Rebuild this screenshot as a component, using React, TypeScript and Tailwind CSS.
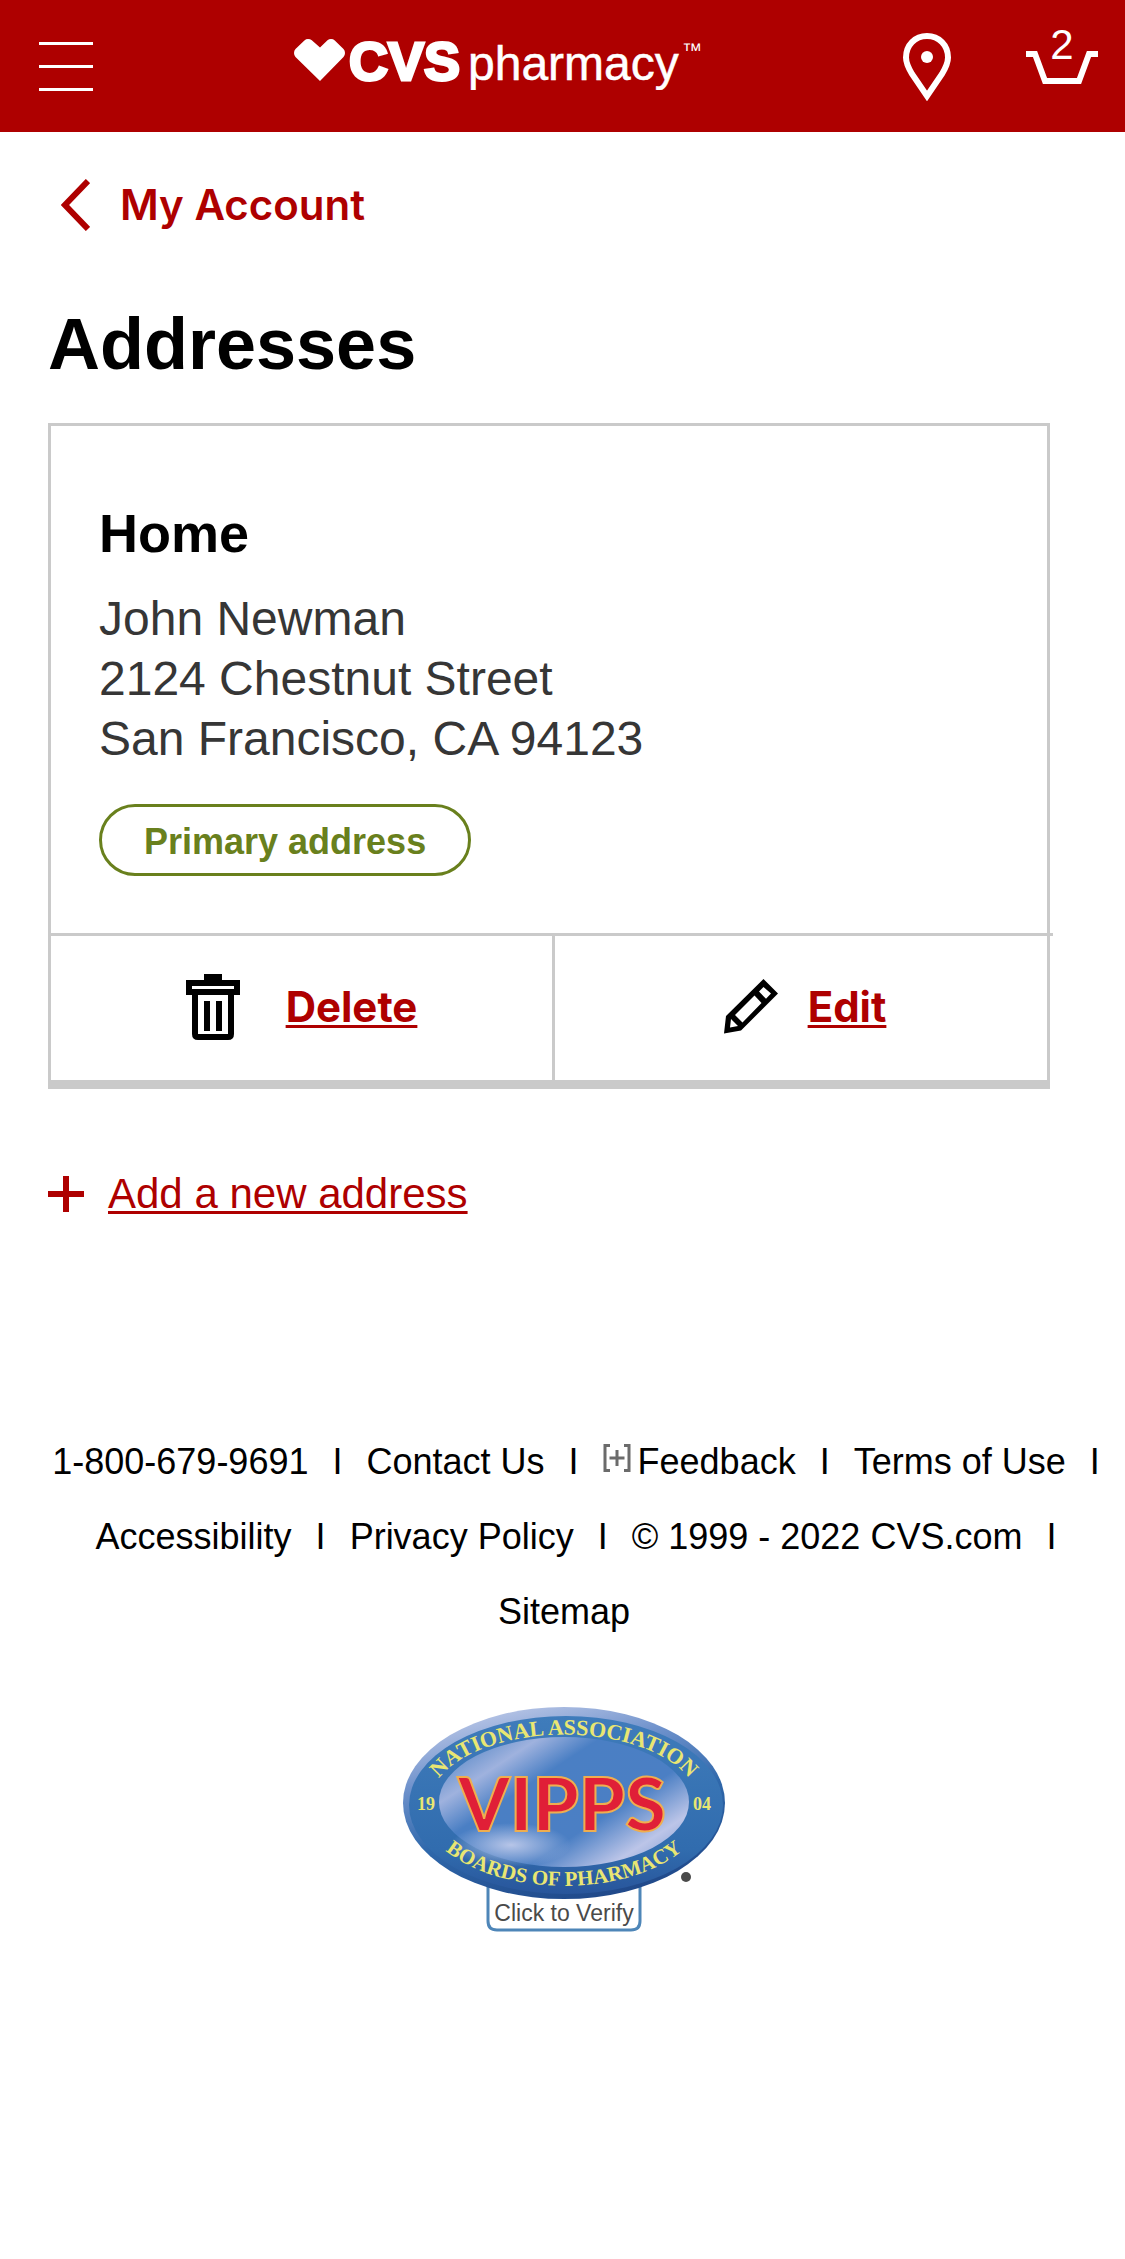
import React from 'react';

const footerLinks = [
  { label: '1-800-679-9691', href: 'tel:18006799691' },
  { label: 'Contact Us', href: '#contact' },
  { label: 'Feedback', href: '#feedback', icon: true },
  { label: 'Terms of Use', href: '#terms' },
  { label: 'Accessibility', href: '#accessibility' },
  { label: 'Privacy Policy', href: '#privacy' },
  { label: '© 1999 - 2022 CVS.com', href: '#copyright' },
];

const Logo: React.FC = () => (
  <svg width="412" height="60" viewBox="0 0 412 60" fill="#fff" role="img" aria-label="CVS pharmacy">
    <path d="M26 17.5 L33.5 10.2 Q35 9 37 9 Q39.2 9 40.8 10.4 L49.5 19 Q51 20.6 51 23 Q51 25.4 49.5 27 L26 51 L1.5 27 Q0 25.4 0 23 Q0 20.6 1.5 19 L10.4 10.4 Q12 9 14 9 Q16.2 9 17.8 10.2 Z" />
    <text x="55" y="50" className="font-['Liberation_Sans',sans-serif] text-[54px] font-bold" stroke="#fff" strokeWidth="3">
      CVS
    </text>
    <text x="174" y="50" className="font-['Liberation_Sans',sans-serif] text-[48px]" stroke="#fff" strokeWidth="0.5">
      pharmacy
    </text>
    <text x="388" y="27" className="font-['Liberation_Sans',sans-serif] text-[20px]">
      ™
    </text>
  </svg>
);

const PinIcon: React.FC = () => (
  <svg width="48" height="68" viewBox="0 0 48 68" fill="none">
    <path
      d="M24 3 C12 3 3 12 3 24.5 C3 31 6 36 9 41 L24 63 L39 41 C42 36 45 31 45 24.5 C45 12 36 3 24 3 Z"
      stroke="#fff"
      strokeWidth="6"
    />
    <circle cx="24" cy="24" r="6" fill="#fff" />
  </svg>
);

const BasketIcon: React.FC = () => (
  <svg width="72" height="33" viewBox="0 0 72 33" fill="none">
    <path d="M0 3 H9 L19 30 H53 L63 3 H72" stroke="#fff" strokeWidth="6" />
  </svg>
);

const TrashIcon: React.FC = () => (
  <svg width="54" height="66" viewBox="0 0 54 66">
    <path
      fillRule="evenodd"
      d="M18 0 H36 V6 H54 V21 H48 V60 Q48 66 42 66 H12 Q6 66 6 60 V21 H0 V6 H18 Z M6 12 V15 H48 V12 Z M12 21 V60 H42 V21 Z"
    />
    <path d="M18 27 H24 V57 H18 Z M30 27 H36 V57 H30 Z" />
  </svg>
);

const PencilIcon: React.FC = () => (
  <svg width="54" height="55" viewBox="0 0 54 55">
    <path
      fillRule="evenodd"
      d="M39.5 0 L54 14.5 L17 51.5 L0 54.5 L2 37 Z M39.5 8 L35 12.5 L42 19.8 L47 14.5 Z M30.5 16.5 L11 36 L18.5 43.5 L37.5 24 Z M7 40 L6 48.5 L14 47 Z"
    />
  </svg>
);

const VippsSeal: React.FC = () => (
  <svg width="324" height="226" viewBox="0 0 324 226" role="img" aria-label="VIPPS seal">
    <defs>
      <linearGradient id="rim" x1="0.2" y1="0" x2="0.6" y2="1">
        <stop offset="0" stopColor="#c3cdea" />
        <stop offset="0.3" stopColor="#6f92cc" />
        <stop offset="0.6" stopColor="#2f68ab" />
        <stop offset="1" stopColor="#20498a" />
      </linearGradient>
      <linearGradient id="ring" x1="0" y1="0" x2="0" y2="1">
        <stop offset="0" stopColor="#3f7cbb" />
        <stop offset="0.75" stopColor="#316cae" />
        <stop offset="1" stopColor="#28559b" />
      </linearGradient>
      <linearGradient id="face" x1="0" y1="0.1" x2="1" y2="0.9">
        <stop offset="0" stopColor="#4a80c2" />
        <stop offset="0.2" stopColor="#9fb2de" />
        <stop offset="0.35" stopColor="#4a7fc4" />
        <stop offset="0.65" stopColor="#4b7fc4" />
        <stop offset="0.85" stopColor="#bcc5e8" />
        <stop offset="1" stopColor="#7f9cd2" />
      </linearGradient>
      <radialGradient id="glow">
        <stop offset="0" stopColor="#c3cdec" stopOpacity="0.9" />
        <stop offset="1" stopColor="#c3cdec" stopOpacity="0" />
      </radialGradient>
      <path id="arcTop" d="M31 83 A135 70 0 0 1 295 83" />
      <path id="arcBottom" d="M26 123 A145 83 0 0 0 300 123" />
    </defs>
    <path d="M87 170 V214 Q87 223 96 223 H230 Q239 223 239 214 V170" fill="#fff" stroke="#4e86b8" strokeWidth="3" />
    <ellipse cx="163" cy="96" rx="161" ry="96" fill="url(#rim)" />
    <ellipse cx="165" cy="98" rx="157" ry="89" fill="url(#ring)" />
    <ellipse cx="163" cy="95" rx="125" ry="65" fill="url(#face)" />
    <ellipse cx="110" cy="138" rx="60" ry="22" fill="url(#glow)" />
    <g className="font-['Liberation_Serif',serif] font-bold" fill="#e9e672">
      <text textAnchor="middle" className="text-[22px]">
        <textPath href="#arcTop" startOffset="50%">
          NATIONAL ASSOCIATION
        </textPath>
      </text>
      <text textAnchor="middle" className="text-[21px]">
        <textPath href="#arcBottom" startOffset="50%">
          BOARDS OF PHARMACY
        </textPath>
      </text>
      <text x="16" y="103" className="text-[18px]">19</text>
      <text x="292" y="103" className="text-[18px]">04</text>
    </g>
    <text
      x="161"
      y="124"
      textAnchor="middle"
      className="font-['Lato',sans-serif] text-[74px] font-black"
      fill="#e01f37"
      stroke="#efae4f"
      strokeWidth="2"
    >
      VIPPS
    </text>
    <circle cx="285" cy="170" r="5" fill="#4a4a4a" />
    <text x="163" y="214" textAnchor="middle" className="font-['Liberation_Sans',sans-serif] text-[23px]" fill="#4a4a4a">
      Click to Verify
    </text>
  </svg>
);

const App: React.FC = () => {
  return (
    <div className="bg-white text-black font-['Liberation_Sans',Arial,sans-serif]">
      {/* Header */}
      <header className="flex items-start bg-[#ae0000] h-[132px] pl-[39px] pr-[27px]">
        <button type="button" aria-label="Menu" className="mt-[42px] flex w-[54px] flex-col gap-5">
          <span className="h-[3px] w-full bg-white" />
          <span className="h-[3px] w-full bg-white" />
          <span className="h-[3px] w-full bg-white" />
        </button>
        <a href="#home" className="mt-[30px] ml-[201px]">
          <Logo />
        </a>
        <a href="#stores" aria-label="Store locator" className="mt-[33px] ml-auto">
          <PinIcon />
        </a>
        <a href="#cart" aria-label="Basket" className="relative mt-[51px] ml-[75px] text-white">
          <BasketIcon />
          <span className="absolute inset-x-0 -top-[30px] text-center text-[42px] leading-[48px]">2</span>
        </a>
      </header>

      <main className="pl-[48px] pr-[75px]">
        <a href="#account" className="mt-[46px] ml-[13px] flex h-[54px] w-fit items-center gap-[30px] text-[#ae0000]">
          <svg width="29" height="52" viewBox="0 0 29 52" fill="none" stroke="currentColor" strokeWidth="6">
            <path d="M27 2 L4 26 L27 50" />
          </svg>
          <span className="font-['Inter',sans-serif] text-[42px] leading-[54px] font-semibold">My Account</span>
        </a>

        <h1 className="mt-[70px] text-[72px] leading-[84px] font-bold">Addresses</h1>

        {/* Address card */}
        <section className="mt-[37px] border-[3px] border-b-[9px] border-[#cacaca]">
          <div className="px-[48px] pt-[77px] pb-[57px]">
            <h2 className="text-[54px] leading-[60px] font-bold">Home</h2>
            <address className="mt-[26px] text-[48px] leading-[60px] text-[#363636] not-italic">
              John Newman
              <br />
              2124 Chestnut Street
              <br />
              San Francisco, CA 94123
            </address>
            <span className="mt-[35px] flex h-[72px] w-fit items-center rounded-full border-[3px] border-[#69801d] px-[42px] pt-1 text-[36px] font-bold text-[#69801d]">
              Primary address
            </span>
          </div>
          <div className="-mr-1.5 h-[3px] bg-[#cacaca]" />
          <div className="grid h-[144px] grid-cols-[42fr_41fr] font-['Inter',sans-serif] text-[42px] font-bold text-[#ae0000]">
            <button type="button" className="flex items-center justify-center gap-[46px] border-r-[3px] border-[#cacaca] pb-[3px]">
              <span className="text-black"><TrashIcon /></span>
              <span className="underline decoration-[3px] underline-offset-[3px]">Delete</span>
            </button>
            <button type="button" className="flex items-center justify-center gap-[30px] pl-2 pb-[3px]">
              <span className="text-black"><PencilIcon /></span>
              <span className="underline decoration-[3px] underline-offset-[3px]">Edit</span>
            </button>
          </div>
        </section>

        <a href="#add" className="mt-[81px] flex w-fit items-center gap-6 text-[42px] leading-[48px] text-[#ae0000]">
          <svg width="36" height="36" viewBox="0 0 36 36" stroke="currentColor" strokeWidth="6">
            <path d="M18 0 V36 M0 18 H36" />
          </svg>
          <span className="underline decoration-[3px] underline-offset-[3px]">Add a new address</span>
        </a>
      </main>

      {/* Footer */}
      <footer className="mt-[206px] flex flex-col items-center">
        <ul className="flex flex-wrap justify-center pl-[51px] text-[36px] leading-[75px]">
          {footerLinks.map((link) => (
            <li key={link.label} className="flex items-center">
              <a href={link.href} className="flex items-center gap-[7px]">
                {link.icon && (
                  <svg width="28" height="28" viewBox="0 0 28 28" fill="none" stroke="#6b6b6b" strokeWidth="3" className="mb-2">
                    <path d="M7 1.5 H2 V26.5 H7 M21 1.5 H26 V26.5 H21 M14 6 V22 M6.5 14 H21.5" />
                  </svg>
                )}
                {link.label}
              </a>
              <span className="mx-6">I</span>
            </li>
          ))}
          <li className="mr-12">
            <a href="#sitemap">Sitemap</a>
          </li>
        </ul>
        <a href="#verify" className="mt-[58px]">
          <VippsSeal />
        </a>
      </footer>
    </div>
  );
};

export default App;
